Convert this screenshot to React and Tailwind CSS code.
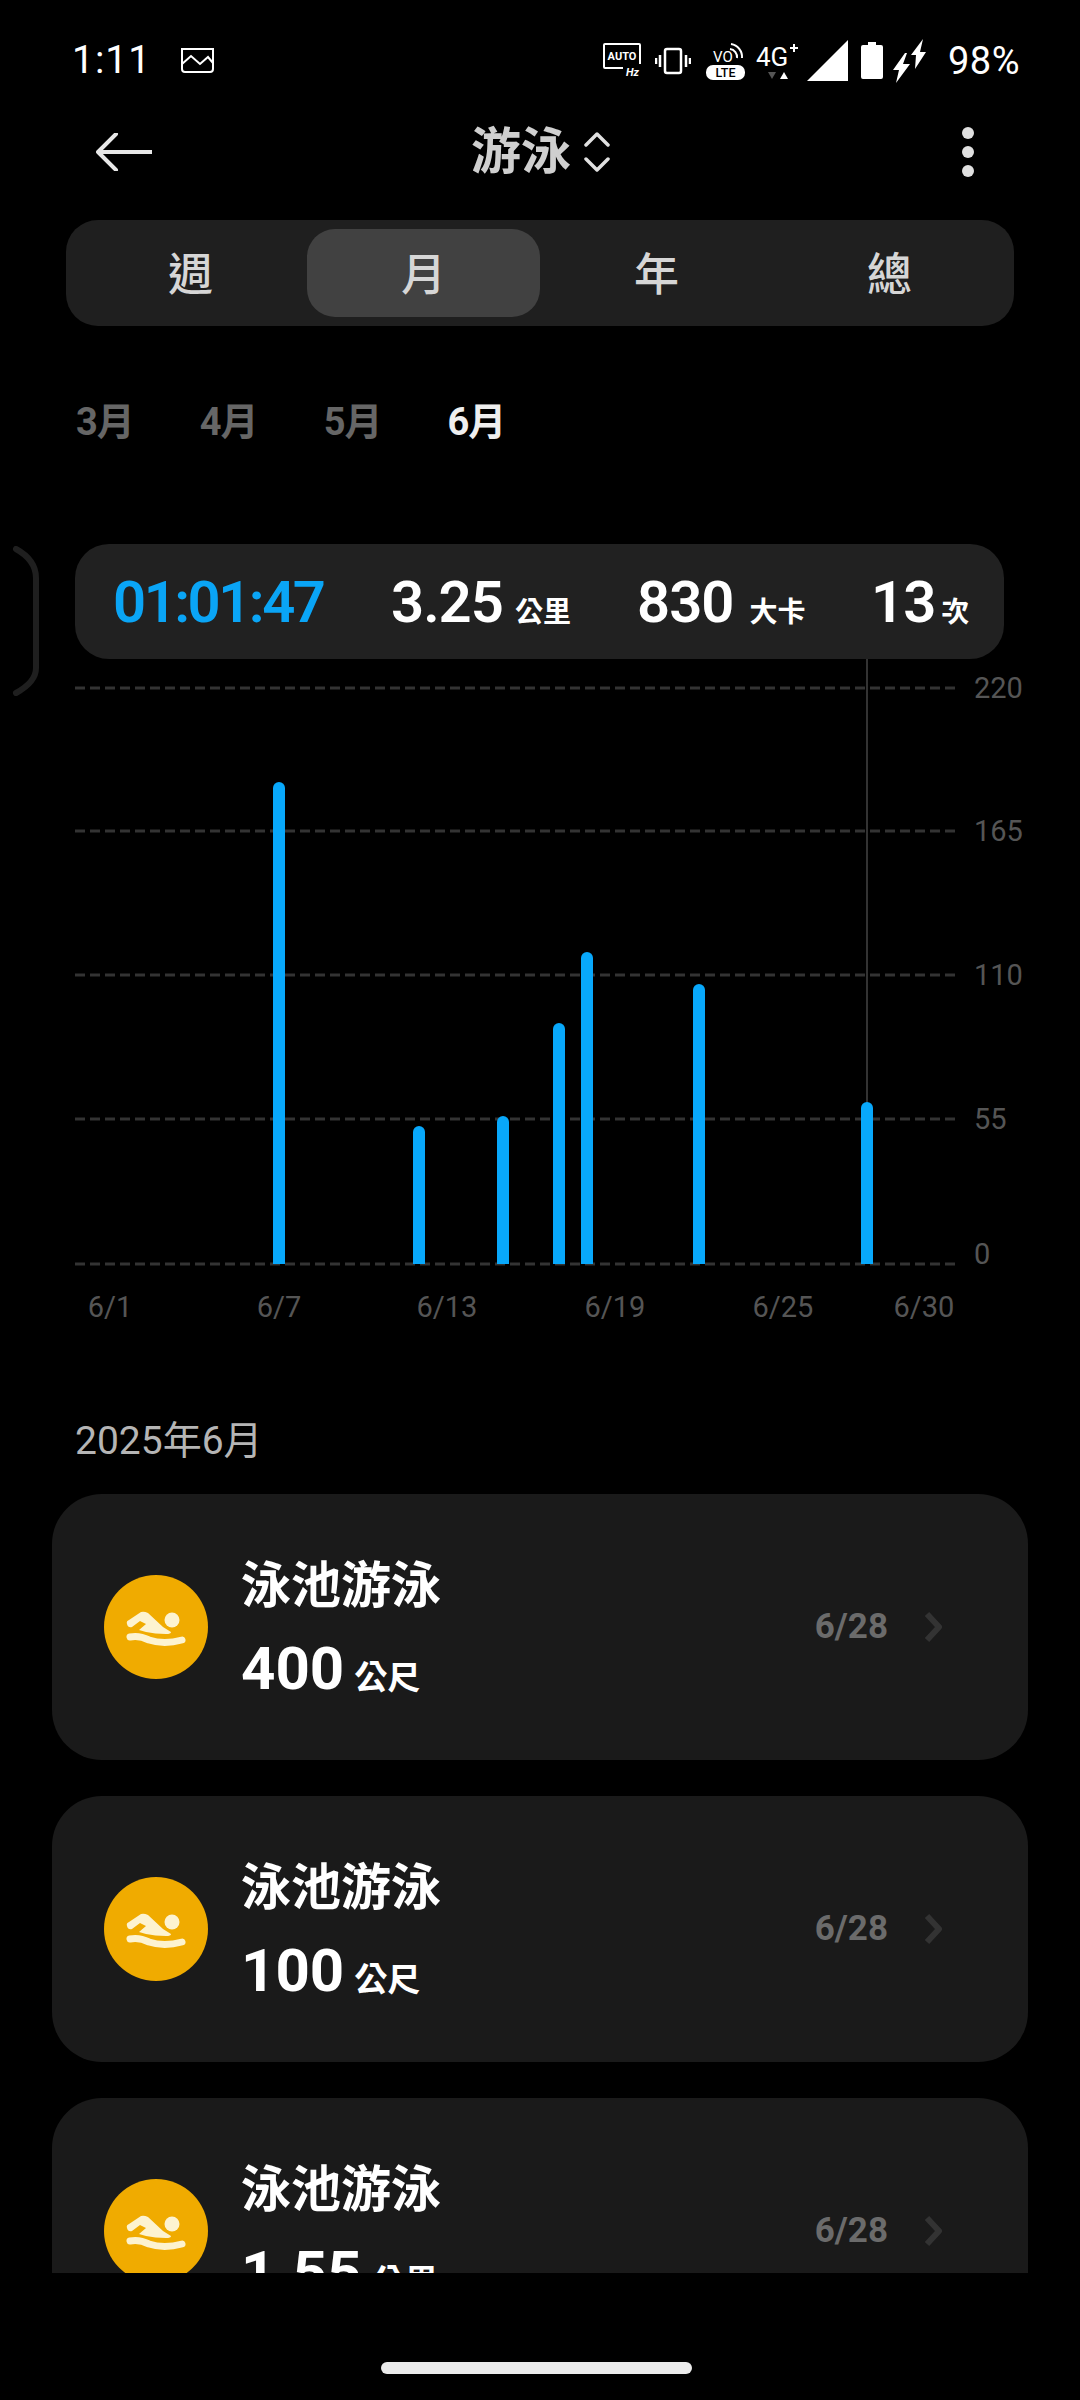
const SANS = "font-['Roboto','Noto_Sans_CJK_TC',sans-serif]";

const tabs = ['週', '月', '年', '總'];
const months = ['3月', '4月', '5月', '6月'];
const gridLines = [
  { y: 29, label: '220', labelY: 39 },
  { y: 172, label: '165', labelY: 182 },
  { y: 316, label: '110', labelY: 326 },
  { y: 460, label: '55', labelY: 470 },
  { y: 605, label: '0', labelY: 605 },
];
const bars = [
  { x: 279, top: 782 },
  { x: 419, top: 1126 },
  { x: 503, top: 1116 },
  { x: 559, top: 1023 },
  { x: 587, top: 952 },
  { x: 699, top: 984 },
  { x: 867, top: 1102 },
];
const xLabels = [
  { x: 110, label: '6/1' },
  { x: 279, label: '6/7' },
  { x: 447, label: '6/13' },
  { x: 615, label: '6/19' },
  { x: 783, label: '6/25' },
  { x: 924, label: '6/30' },
];
const workouts = [
  { value: '400', unit: '公尺' },
  { value: '100', unit: '公尺' },
  { value: '1.55', unit: '公里' },
];

function StatusIcons() {
  return (
    <div className="flex items-center">
      <svg width="38" height="36" viewBox="0 0 38 36" className="mr-[14px]" fill="none">
        <path d="M37 21V2a1 1 0 0 0-1-1H2a1 1 0 0 0-1 1v22a1 1 0 0 0 1 1h18" stroke="white" strokeWidth="2" />
        <text x="19" y="17" textAnchor="middle" fontSize="11" fontWeight="700" fill="white" fontFamily="Roboto">AUTO</text>
        <text x="36" y="33" textAnchor="end" fontSize="11" fontWeight="700" fontStyle="italic" fill="white" fontFamily="Roboto">Hz</text>
      </svg>
      <svg width="36" height="28" viewBox="0 0 36 28" className="mr-[15px]" fill="none">
        <rect x="10" y="2" width="16" height="24" rx="2" stroke="white" strokeWidth="2.5" />
        <path d="M5 8v12M1 11v6M31 8v12M35 11v6" stroke="white" strokeWidth="2.5" />
      </svg>
      <svg width="39" height="40" viewBox="0 0 39 40" className="mr-[11px]" fill="none">
        <text x="7" y="21" fontSize="15" fill="white" fontFamily="Roboto">VO</text>
        <path d="M24 8a8 8 0 0 1 7 9M25 3a13 13 0 0 1 11 14" stroke="white" strokeWidth="2" />
        <rect x="0" y="24" width="39" height="15" rx="7" fill="white" />
        <text x="19.5" y="36" textAnchor="middle" fontSize="12.5" fontWeight="500" fill="black" fontFamily="Roboto">LTE</text>
      </svg>
      <svg width="42" height="40" viewBox="0 0 42 40" className="mr-[9px]">
        <text x="0" y="25" fontSize="26" fill="white" fontFamily="Roboto">4G</text>
        <path d="M38 3v8M34 7h8" stroke="white" strokeWidth="2" />
        <path d="M12 31h8l-4 7z" fill="#555" />
        <path d="M24 38h8l-4-7z" fill="white" />
      </svg>
      <svg width="41" height="41" viewBox="0 0 41 41" className="mr-[13px]">
        <path d="M41 0v41H0z" fill="white" />
      </svg>
      <svg width="22" height="37" viewBox="0 0 22 37" className="mr-[10px]">
        <path d="M7 0h8v3h5a2 2 0 0 1 2 2v30a2 2 0 0 1-2 2H2a2 2 0 0 1-2-2V5a2 2 0 0 1 2-2h5z" fill="white" />
      </svg>
      <svg width="33" height="44" viewBox="0 0 33 44" className="mr-[22px]">
        <path d="M12 14L0 31h6L3 44l14-19h-7l4-11z" fill="white" />
        <path d="M30 0L18 16h5l-1 14 11-17h-6l3-13z" fill="white" />
      </svg>
      <span className="text-[38px] leading-none tracking-[0.5px] text-white">98%</span>
    </div>
  );
}

function StatusBar() {
  return (
    <div className="flex h-[121px] shrink-0 items-center justify-between pl-[72px] pr-[60px]">
      <div className="flex items-center gap-[30px]">
        <span className="text-[39px] leading-none tracking-[1px] text-white">1:11</span>
        <svg width="33" height="25" viewBox="0 0 33 25" fill="none">
          <path d="M1 1h31v20a3 3 0 0 1-3 3H4a3 3 0 0 1-3-3z" stroke="white" strokeWidth="2" />
          <path d="M1 16l9-8 9 8 8-7 5 6" stroke="white" strokeWidth="2" />
        </svg>
      </div>
      <StatusIcons />
    </div>
  );
}

function Header() {
  return (
    <div className="flex h-[62px] shrink-0 items-center pl-[96px] pr-[96px]">
      <svg width="56" height="38" viewBox="0 0 56 38" fill="none">
        <path d="M20 1L2 19l18 18M2 19h54" stroke="#e8e8e8" strokeWidth="4" strokeLinecap="round" strokeLinejoin="round" />
      </svg>
      <div className="ml-[319px] flex items-center gap-[12px]">
        <span className="text-[50px] font-bold leading-none text-[#cfcfcf]">游泳</span>
        <svg width="28" height="40" viewBox="0 0 28 40" fill="none">
          <path d="M3 13L14 2l11 11M3 27l11 11 11-11" stroke="#e0e0e0" strokeWidth="3.5" strokeLinecap="round" strokeLinejoin="round" />
        </svg>
      </div>
      <div className="ml-auto mr-[10px] flex flex-col gap-[7px]">
        <span className="h-[12px] w-[12px] rounded-full bg-[#e0e0e0]" />
        <span className="h-[12px] w-[12px] rounded-full bg-[#e0e0e0]" />
        <span className="h-[12px] w-[12px] rounded-full bg-[#e0e0e0]" />
      </div>
    </div>
  );
}

function Tabs() {
  return (
    <div className="mx-[66px] mt-[37px] grid h-[106px] shrink-0 grid-cols-4 rounded-[32px] bg-[#1f1f1f] px-[8px] py-[9px]">
      {tabs.map((tab) => (
        <div
          key={tab}
          className={`flex items-center justify-center rounded-[28px] pt-[6px] text-[45px] font-medium text-[#d6d6d6] ${tab === '月' ? 'bg-[#414141]' : ''}`}
        >
          {tab}
        </div>
      ))}
    </div>
  );
}

function Months() {
  return (
    <div className="mt-[72px] flex shrink-0 gap-[66px] pl-[76px]">
      {months.map((m) => (
        <span
          key={m}
          className={`text-[38px] font-bold leading-[48px] tracking-[-1px] ${m === '6月' ? 'text-[#efefef]' : 'text-[#666666]'}`}
        >
          {m}
        </span>
      ))}
    </div>
  );
}

function Stat({ value, unit, className, unitClass }) {
  return (
    <div className={`flex items-baseline text-white ${className}`}>
      <span className="text-[58px] font-semibold leading-none tracking-[-1px]">{value}</span>
      <span className={`text-[28px] font-semibold leading-none ${unitClass}`}>{unit}</span>
    </div>
  );
}

function SummaryPill() {
  return (
    <div className="mx-[75px] mt-[98px] flex h-[115px] w-[929px] shrink-0 items-center rounded-[34px] bg-[#212121] pl-[38px]">
      <span className="w-[278px] text-[58px] font-semibold leading-none tracking-[-2.5px] text-[#0aa5f6]">01:01:47</span>
      <Stat value="3.25" unit="公里" className="w-[246px]" unitClass="ml-[12px]" />
      <Stat value="830" unit="大卡" className="w-[234px]" unitClass="ml-[16px]" />
      <Stat value="13" unit="次" unitClass="ml-[6px]" />
    </div>
  );
}

function Chart() {
  return (
    <svg width="1080" height="672" viewBox="0 0 1080 672" className="shrink-0">
      <line x1="867" y1="0" x2="867" y2="605" stroke="#333333" strokeWidth="2" />
      {gridLines.map((g) => (
        <g key={g.label}>
          <line x1="75" x2="958" y1={g.y} y2={g.y} stroke="#333333" strokeWidth="3" strokeDasharray="10 5" />
          <text x="974" y={g.labelY} fontSize="29" fill="#555555" fontFamily="Roboto">{g.label}</text>
        </g>
      ))}
      {bars.map((b) => (
        <path
          key={b.x}
          d={`M${b.x - 6} 605V${b.top - 659 + 6}a6 6 0 0 1 12 0V605z`}
          fill="#08a8fb"
        />
      ))}
      {xLabels.map((l) => (
        <text key={l.label} x={l.x} y="658" textAnchor="middle" fontSize="29" fill="#555555" fontFamily="Roboto">
          {l.label}
        </text>
      ))}
    </svg>
  );
}

function SwimIcon() {
  return (
    <div className="flex h-[104px] w-[104px] shrink-0 items-center justify-center rounded-full bg-[#f0ab00]">
      <svg width="75" height="55" viewBox="0 0 75 55" fill="#fdf3d0" className="shrink-0">
        <circle cx="53" cy="20" r="7.5" />
        <path d="M8 24Q7 21 10 20L22 12Q25 11 29 13L44 27L52 32Q52 34 47 34Q36 34 27 32L20 30L27 24L21 21L13 27Q9 28 8 24z" />
        <path d="M11 37Q20 35 30 40Q45 45 63 40" fill="none" stroke="#fdf3d0" strokeWidth="7" strokeLinecap="round" />
      </svg>
    </div>
  );
}

function WorkoutCard({ value, unit }) {
  return (
    <div className="mb-[36px] flex h-[266px] shrink-0 items-center rounded-[50px] bg-[#1a1a1a] pl-[52px] pr-[86px]">
      <SwimIcon />
      <div className="ml-[33px] flex flex-1 flex-col pt-[2px]">
        <span className="text-[50px] font-bold leading-[64px] text-white">泳池游泳</span>
        <div className="mt-[18px] flex items-baseline text-white">
          <span className="text-[60px] font-bold leading-[66px]">{value}</span>
          <span className="ml-[10px] text-[33px] font-bold">{unit}</span>
        </div>
      </div>
      <span className="text-[35px] font-bold text-[#6b6b6b]">6/28</span>
      <svg width="18" height="32" viewBox="0 0 18 32" fill="none" className="ml-[36px]">
        <path d="M3 3l12 13L3 29" stroke="#333333" strokeWidth="6" strokeLinejoin="round" />
      </svg>
    </div>
  );
}

export default function App() {
  return (
    <div className={`relative flex h-[2400px] w-[1080px] flex-col overflow-hidden bg-black ${SANS}`}>
      <StatusBar />
      <Header />
      <Tabs />
      <Months />
      <SummaryPill />
      <svg width="40" height="150" viewBox="0 0 40 150" fill="none" className="absolute left-0 top-[546px]">
        <path d="M16 3Q36 14 36 32V122Q36 136 16 147" stroke="#1f1f1f" strokeWidth="6" strokeLinecap="round" />
      </svg>
      <Chart />
      <p className="ml-[75px] mt-[86px] shrink-0 text-[39px] leading-[48px] text-[#b5b5b5]">2025年6月</p>
      <div className="mx-[52px] mt-[29px] flex h-[779px] shrink-0 flex-col overflow-hidden">
        {workouts.map((w, i) => (
          <WorkoutCard key={i} value={w.value} unit={w.unit} />
        ))}
      </div>
      <div className="absolute bottom-[26px] left-[381px] h-[12px] w-[311px] rounded-full bg-[#ebebeb]" />
    </div>
  );
}
